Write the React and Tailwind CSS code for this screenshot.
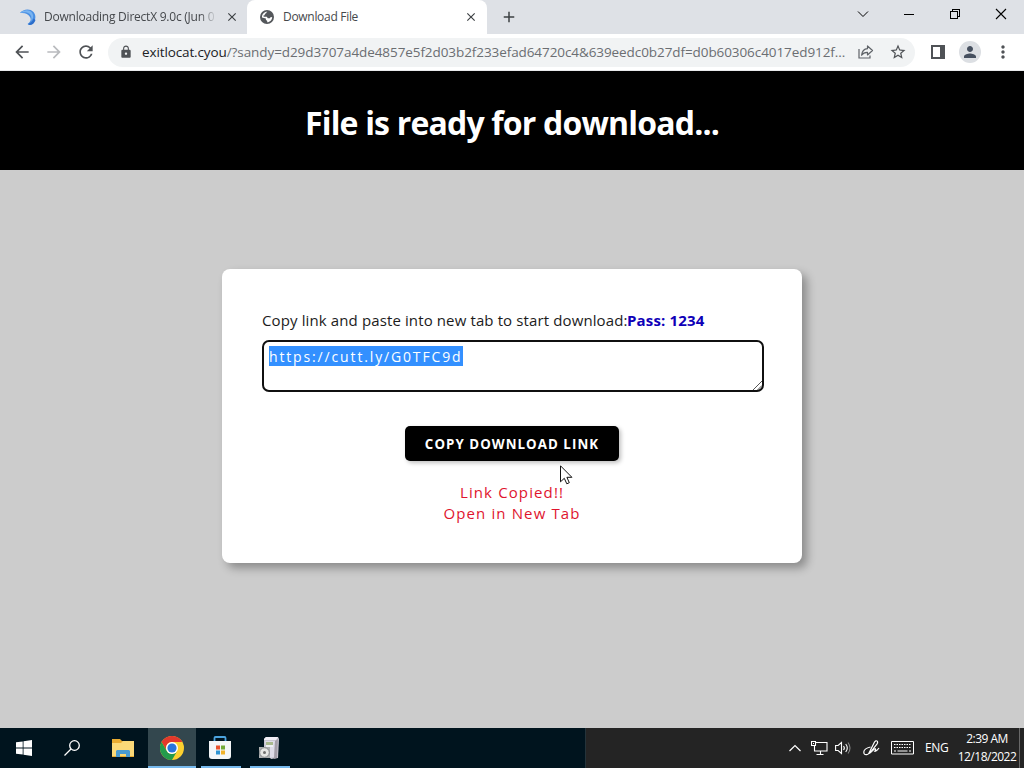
import React from 'react';
import {
  MdAdd,
  MdArrowBack,
  MdArrowForward,
  MdClose,
  MdLock,
  MdMoreVert,
  MdPerson,
  MdRefresh,
  MdStarBorder,
} from 'react-icons/md';

function SwirlIcon() {
  return (
    <svg width="16" height="16" viewBox="0 0 16 16">
      <path d="M0 4C3 0 10-1 13.500 3c3.500 4 2 11-3.500 13-1 0-2-.5-2.500-1 3-2 4-4 2.500-7C8 4.500 5 3.500 0 4Z" fill="#4a8fe2" />
      <path d="M0 4C4 .5 10 0 12.500 4.500c1.500 3 .5 5.500-1.500 7.500 1-4 0-6-2-7.500C6.500 2.800 3 3 0 4Z" fill="#79b4f1" />
      <path d="M8 15c3-1 5-3 5.500-5.500L15.500 11c-1 3-3 5-6 5Z" fill="#2c6ecb" />
    </svg>
  );
}

function GlobeIcon() {
  return (
    <svg width="14" height="14" viewBox="0 0 14 14">
      <circle cx="7" cy="7" r="7" fill="#54575b" />
      <path d="M7.500 1.800C6.800 2 6 2.800 6 3.600c-1 0-1.400.6-1.200 1.600H3.600v1.500h3.200l1 1.500h2l1-1.200 1.400.2c-.1 2.600-2.200 4.900-5 5.100V11L5.900 9.800V8.600L2 7.400C1.800 4.300 4.200 1.700 7.500 1.800Z" fill="#fff" />
    </svg>
  );
}

function ShareIcon() {
  return (
    <svg width="16" height="14" viewBox="0 0 16 14" fill="none" stroke="#5f6368" strokeWidth="1.2">
      <path d="M1 4v9h11v-2.500" />
      <path d="M9.500 1v2.700C6 4 4 6.500 3.600 10.200 5 8 7 7.200 9.500 7.300V10l5-4.500Z" strokeLinejoin="round" />
    </svg>
  );
}

function WindowControls() {
  return (
    <div className="flex h-7 items-center text-black">
      <div className="flex w-[46px] justify-center">
        <svg width="12" height="12" viewBox="0 0 12 12" fill="none" stroke="currentColor">
          <path d="m1 3.500 5 5 5-5" />
        </svg>
      </div>
      <div className="flex w-[46px] justify-center">
        <div className="mt-px h-px w-2.5 bg-black" />
      </div>
      <div className="flex w-[46px] justify-center">
        <svg width="10" height="10" viewBox="0 0 10 10" fill="none" stroke="currentColor" shapeRendering="crispEdges">
          <path d="M.5 2.500h7v7h-7zM2.500 2.500v-2h7v7h-2" />
        </svg>
      </div>
      <div className="flex w-[46px] justify-center">
        <svg width="12" height="12" viewBox="0 0 12 12" fill="none" stroke="currentColor" strokeWidth="1.1">
          <path d="m1 1 10 10M11 1 1 11" />
        </svg>
      </div>
    </div>
  );
}

function TabStrip() {
  return (
    <div className="flex h-[34px] bg-[#dee1e6] text-[12px] text-[#45484c]">
      <div className="flex w-[247px] items-center pl-5">
        <SwirlIcon />
        <span className="ml-2 w-[173px] overflow-hidden whitespace-nowrap tracking-[-0.23px] [mask-image:linear-gradient(to_right,black_90%,transparent)]">
          Downloading DirectX 9.0c (Jun 0
        </span>
        <MdClose className="ml-2 size-3.5 text-[#3c4043]" />
      </div>
      <div className="flex w-[240px] items-center rounded-t-lg bg-white pl-[13px] pr-[9px]">
        <GlobeIcon />
        <span className="ml-[9px] flex-1 tracking-[-0.3px]">Download File</span>
        <MdClose className="size-3.5 text-[#3c4043]" />
      </div>
      <div className="flex flex-1 items-center pl-[13px]">
        <MdAdd className="size-[18px] text-[#3c4043]" />
      </div>
      <WindowControls />
    </div>
  );
}

function Toolbar() {
  return (
    <div className="flex h-[37px] items-center border-b border-[#e8e9eb] bg-white text-[#4f5256]">
      <MdArrowBack className="ml-3 size-5" />
      <MdArrowForward className="ml-3 size-5 text-[#b9bbbe]" />
      <MdRefresh className="ml-3 size-5" />
      <div className="ml-3 flex h-[29px] w-[807px] items-center rounded-full bg-[#f1f3f4] pl-[11px]">
        <MdLock className="size-3.5" />
        <div className="ml-[9px] w-[706px] whitespace-nowrap text-[13.500px] tracking-[-0.08px] text-[#6b6e72]">
          <span className="tracking-[-0.12px] text-[#202124]">exitlocat.cyou</span>
          /?sandy=d29d3707a4de4857e5f2d03b2f233efad64720c4&amp;639eedc0b27df=d0b60306c4017ed912f...
        </div>
        <span className="ml-2.5"><ShareIcon /></span>
        <MdStarBorder className="ml-[15px] size-[18px]" />
      </div>
      <svg className="ml-4" width="14" height="14" viewBox="0 0 14 14">
        <path d="M1 1h12v12H1z" fill="none" stroke="#4f5256" strokeWidth="2" />
        <path d="M9 1h4v12H9z" fill="#4f5256" />
      </svg>
      <div className="ml-[14px] flex size-[22px] items-center justify-center rounded-full bg-[#dcdfe3]">
        <MdPerson className="size-[18px] text-[#46505f]" />
      </div>
      <MdMoreVert className="ml-3 size-5" />
    </div>
  );
}

function DownloadCard() {
  return (
    <div className="h-[294px] w-[580px] rounded-lg bg-white p-10 text-black shadow-[5px_5px_10px_rgba(0,0,0,0.32)]">
      <div className="-mt-px flex h-6 items-center whitespace-nowrap text-[15px]">
        <span className="w-[365px] tracking-[0.120px] text-[#1c1c1c]">Copy link and paste into new tab to start download:</span>
        <span className="font-bold tracking-[0.15px] text-[#0f00b8]">Pass: 1234</span>
      </div>
      <div className="mt-2 flex h-[52px] w-[502px] items-start justify-between rounded-[7px] border-2 border-[#101010] pl-[5px] pt-1">
        <span className="h-5 w-[194px] whitespace-nowrap bg-[#3390ff] text-[14px] leading-[22px] tracking-[1.850px] text-white">
          https://cutt.ly/G0TFC9d
        </span>
        <svg className="self-end" width="10" height="9" viewBox="0 0 10 9" stroke="#555">
          <path d="m1 9 9-9M5.500 9 10 4.500" />
        </svg>
      </div>
      <button className="mx-auto mt-[34px] block h-[35px] w-[214px] whitespace-nowrap rounded-[5px] bg-black pt-0.5 text-[13.300px] font-bold tracking-[1.050px] text-white shadow-[2px_2px_4px_rgba(0,0,0,0.25)]">
        COPY DOWNLOAD LINK
      </button>
      <p className="mt-[21px] text-center text-[15px] leading-[21px] tracking-[1.120px] text-[#e0142e]">
        Link Copied!!
        <br />
        Open in New Tab
      </p>
    </div>
  );
}

function WindowsLogo() {
  return (
    <svg width="16" height="16" viewBox="0 0 16 16" fill="#fff">
      <path d="M0 2.300 6.700 1.400v6.200H0zM7.500 1.300 16 0v7.600H7.500zM0 8.400h6.700v6.200L0 13.700zM7.500 8.400H16V16l-8.500-1.300z" />
    </svg>
  );
}

function SearchIcon() {
  return (
    <svg width="16" height="16" viewBox="0 0 16 16" fill="none" stroke="#fff" strokeWidth="1.300">
      <circle cx="10.500" cy="5.500" r="4.800" />
      <path d="M7 9 .5 15.500" />
    </svg>
  );
}

function FolderIcon() {
  return (
    <svg width="22" height="18" viewBox="0 0 22 18">
      <path d="M0 0h8l2 2h12v16H0z" fill="#e9ab31" />
      <path d="M0 4h9l2-2h11v15H0z" fill="#fbd978" />
      <path d="M4 18v-6l1-1h12l1 1v6h-4v-3H8v3z" fill="#4a9bd1" />
    </svg>
  );
}

function ChromeIcon() {
  return (
    <svg width="24" height="24" viewBox="0 0 24 24">
      <circle cx="12" cy="12" r="12" fill="#fcd02f" />
      <path d="M1.600 6A12 12 0 0 1 22.400 6H12a6 6 0 0 0-5.200 9z" fill="#e2382c" />
      <path d="M1.600 6A12 12 0 0 0 12 24l5.200-9A6 6 0 0 1 6.800 15z" fill="#239b4b" />
      <circle cx="12" cy="12" r="6" fill="#fff" />
      <circle cx="12" cy="12" r="4.600" fill="#2875dc" />
    </svg>
  );
}

function StoreIcon() {
  return (
    <svg width="24" height="24" viewBox="0 0 24 24">
      <path d="M6.500 6V2q0-1 1-1h9q1 0 1 1v4" fill="none" stroke="#4ba4df" strokeWidth="1.800" />
      <path d="M1 5h22v15q0 3-3 3H4q-3 0-3-3z" fill="#f4f6f7" />
      <path d="M8 9.500h4v4H8z" fill="#e9522d" />
      <path d="M13 9.500h4v4h-4z" fill="#72a936" />
      <path d="M8 14.500h4v4H8z" fill="#3094d1" />
      <path d="M13 14.500h4v4h-4z" fill="#f1b229" />
    </svg>
  );
}

function InstallerIcon() {
  return (
    <svg width="22" height="24" viewBox="0 0 22 24">
      <path d="m6 3 2-2h12l1 2-1 19-7 1-7-8z" fill="#c9c7d2" />
      <path d="m6 3 2-2h12l-2 3H6z" fill="#f1eff6" />
      <path d="M7 5h10l-1 16-5 1z" fill="#dedce8" />
      <path d="M8 6h7v4H8z" fill="#a9b98f" />
      <path d="M8 9h7v2H8z" fill="#eef0f4" />
      <path d="m17 5 3-2-1 19-3 1z" fill="#a39ea9" />
      <path d="M1 11h11v11H1z" fill="#aeb0b0" />
      <circle cx="6.500" cy="16.500" r="4.800" fill="#e6e6e3" stroke="#85878a" />
      <circle cx="6.500" cy="16.500" r="1.500" fill="#70706e" />
    </svg>
  );
}

function TrayIcons() {
  return (
    <div className="flex items-center">
      <svg width="12" height="8" viewBox="0 0 12 8" fill="none" stroke="#fff" strokeWidth="1.200">
        <path d="m.5 7 5.500-5.500L11.500 7" />
      </svg>
      <svg className="ml-2.5" width="17" height="16" viewBox="0 0 17 16" fill="none" stroke="#fff" strokeWidth="1.100">
        <path d="M5 2.500h11v8.500H3.500V6M9.500 11v3M5.500 14.500h7" />
        <path d="M.5 1.500h4v4h-4zM2 3.500h1" />
      </svg>
      <svg className="ml-[7px]" width="17" height="14" viewBox="0 0 17 14" fill="none" stroke="#fff" strokeWidth="1.100">
        <path d="M.6 4.500h2.500L6.500 1.500v11L3.100 9.500H.6zM8.500 5q1.700 2 0 4M10.700 3q3.200 4 0 8" />
        <path d="M13 1.500q4 5.500 0 11" stroke="#858585" />
      </svg>
      <svg className="ml-[11px]" width="17" height="17" viewBox="0 0 17 17" fill="none" stroke="#fff" strokeWidth="1.200">
        <path d="M6 13 11.500 2q1.500-2 2.700-.8.9 1-.1 2.600L7.200 12.500zM6 13l1.200-.5" />
        <path d="M7.500 7Q1 8.500.8 12q0 3.500 3.500 2.500 3-1 5-3.500 2.500-3 3.200-2.200.8.800-.8 2.500 1.500.5 4.300-3.300" />
      </svg>
      <svg className="ml-[11px]" width="23" height="14" viewBox="0 0 23 14" fill="none" stroke="#fff">
        <path d="M.5.500h22v12.500H.5z" />
        <path d="M3 3.500h17M3 6.500h17" strokeDasharray="1.500 1" />
        <path d="M3 10h2M6.500 10h10M18 10h2" />
      </svg>
      <span className="ml-[11px] w-6 text-[12px] tracking-[-0.3px]">ENG</span>
    </div>
  );
}

function Taskbar() {
  return (
    <div className="flex h-10 bg-[#242424] text-white">
      <div className="flex w-[586px] border-r border-[#24333a] bg-[#00141e]">
        <div className="flex w-12 items-center justify-center"><WindowsLogo /></div>
        <div className="flex w-12 items-center justify-center"><SearchIcon /></div>
        <div className="ml-[3px] flex w-[49px] items-center justify-center pr-0.5"><FolderIcon /></div>
        <div className="flex w-12 items-center justify-center border-b-2 border-[#76b9ed] bg-[#33474e] pt-0.5"><ChromeIcon /></div>
        <div className="ml-[5px] flex w-10 items-center justify-center border-b-2 border-[#76b9ed] pr-0.5 pt-0.5"><StoreIcon /></div>
        <div className="ml-[9px] flex w-10 items-center justify-center border-b-2 border-[#76b9ed] pr-0.5 pt-0.5"><InstallerIcon /></div>
      </div>
      <div className="flex flex-1 items-center justify-end">
        <TrayIcons />
        <div className="ml-[7px] mr-px w-[62px] whitespace-nowrap text-center text-[12px] leading-[18px] tracking-[-0.5px]">
          2:39 AM
          <br />
          12/18/2022
        </div>
        <div className="h-full w-[5px] border-l border-[#686868]" />
      </div>
    </div>
  );
}

export default function App() {
  return (
    <div className="flex h-screen w-screen flex-col overflow-hidden bg-[#cccccc] font-['Open_Sans','Noto_Sans',sans-serif]">
      <TabStrip />
      <Toolbar />
      <header className="flex h-[99px] items-center justify-center bg-black pt-1 text-white">
        <h1 className="whitespace-nowrap text-[32px] font-bold tracking-[-0.820px]">File is ready for download...</h1>
      </header>
      <main className="flex h-[558px] justify-center pt-[99px]">
        <DownloadCard />
      </main>
      <Taskbar />
      <svg className="absolute left-[560px] top-[465px]" width="13" height="20" viewBox="0 0 13 20">
        <path d="M.5.800v16l3.800-3.500 2.500 5.500 2.500-1.100-2.400-5.400h5z" fill="#fff" stroke="#111" />
      </svg>
    </div>
  );
}
